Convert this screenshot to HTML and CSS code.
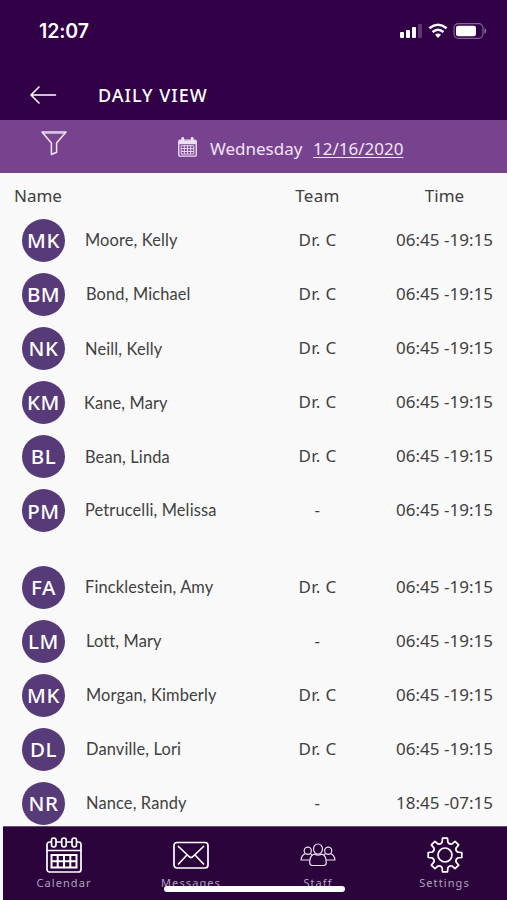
FILE: index.html
```html
<!DOCTYPE html>
<html lang="en">
<head>
<meta charset="utf-8">
<title>Daily View</title>
<link rel="stylesheet" href="styles.css">
</head>
<body>
<div class="app">
  <header class="header">
    <div class="status">
      <span class="clock">12:07</span>
      <svg class="status-icons" viewBox="0 0 88 18" fill="#fff">
        <rect x="1" y="11" width="4" height="6" rx="1"/><rect x="7" y="9" width="4" height="8" rx="1"/><rect x="13" y="6" width="4" height="11" rx="1"/><rect x="19" y="3" width="4" height="14" rx="1" opacity=".22"/>
        <g fill="none" stroke="#fff" stroke-width="2.5"><path d="M30.4 7.2Q39 .4 47.6 7.2"/><path d="M33.6 11Q39 6.4 44.4 11"/></g>
        <path d="M36 13.8Q39 11.4 42 13.8L39 17Z"/>
        <rect x="55" y="2.7" width="29" height="14.6" rx="4.5" fill="none" stroke="#fff" stroke-width="1.2" opacity=".4"/>
        <rect x="57" y="4.7" width="20" height="10.6" rx="2.2"/><path d="M85.5 7.3Q87.3 8 87.3 10T85.5 12.7Z" opacity=".45"/>
      </svg>
    </div>
    <div class="titlebar">
      <svg class="back" viewBox="0 0 28 20" fill="none" stroke="#fff" stroke-width="1.6" stroke-linecap="round" stroke-linejoin="round"><path d="M26.5 10H2M10 2L2 10L10 18"/></svg>
      <h1>DAILY VIEW</h1>
    </div>
  </header>
  <div class="datebar">
    <svg class="filter" viewBox="0 0 28 26" fill="none" stroke="#f5e6fb" stroke-width="1.5" stroke-linejoin="round"><path d="M2 2H26L16.6 13V22.2L11.4 24.5V13Z"/><path d="M3.5 3.4H24.5" stroke-width=".7"/></svg>
    <svg class="date-icon" viewBox="0 0 18 19" fill="none" stroke="#f1dff7"><rect x=".7" y="3" width="16.6" height="15.2" rx="1.2" stroke-width="1.3"/><path d="M1 4.5H17M1 6H17" stroke-width="1.8"/><path d="M4.5 1.5V5M13.5 1.5V5" stroke-width="2.8" stroke-linecap="round"/><path d="M3 8.3H15V16.2H3ZM6 8V16M9 8V16M12 8V16M3 11H15M3 13.7H15" stroke-width=".9"/></svg>
    <span class="weekday">Wednesday</span>
    <span class="date">12/16/2020</span>
  </div>
  <main class="list">
    <div class="row head"><span class="name-head">Name</span><span class="team">Team</span><span class="time">Time</span></div>
    <div class="row"><span class="avatar">MK</span><span class="name n1">Moore, Kelly</span><span class="team">Dr. C</span><span class="time">06:45 -19:15</span></div>
    <div class="row"><span class="avatar">BM</span><span class="name n2">Bond, Michael</span><span class="team">Dr. C</span><span class="time">06:45 -19:15</span></div>
    <div class="row"><span class="avatar">NK</span><span class="name n3">Neill, Kelly</span><span class="team">Dr. C</span><span class="time">06:45 -19:15</span></div>
    <div class="row"><span class="avatar">KM</span><span class="name n4">Kane, Mary</span><span class="team">Dr. C</span><span class="time">06:45 -19:15</span></div>
    <div class="row"><span class="avatar">BL</span><span class="name n5">Bean, Linda</span><span class="team">Dr. C</span><span class="time">06:45 -19:15</span></div>
    <div class="row"><span class="avatar">PM</span><span class="name n6">Petrucelli, Melissa</span><span class="team">-</span><span class="time">06:45 -19:15</span></div>
    <div class="row group"><span class="avatar">FA</span><span class="name n7">Fincklestein, Amy</span><span class="team">Dr. C</span><span class="time">06:45 -19:15</span></div>
    <div class="row"><span class="avatar">LM</span><span class="name n8">Lott, Mary</span><span class="team">-</span><span class="time">06:45 -19:15</span></div>
    <div class="row"><span class="avatar">MK</span><span class="name n9">Morgan, Kimberly</span><span class="team">Dr. C</span><span class="time">06:45 -19:15</span></div>
    <div class="row"><span class="avatar">DL</span><span class="name n10">Danville, Lori</span><span class="team">Dr. C</span><span class="time">06:45 -19:15</span></div>
    <div class="row"><span class="avatar">NR</span><span class="name n11">Nance, Randy</span><span class="team">-</span><span class="time">18:45 -07:15</span></div>
  </main>
  <nav class="tabs">
    <div class="tab">
      <svg viewBox="0 0 36 36" fill="none" stroke="#fff" stroke-width="1.7"><rect x="1" y="5" width="34" height="30" rx="2.5"/><path d="M1 13.5H35" /><g fill="#2a043b"><rect x="5.5" y="1" width="4.5" height="9" rx="2.2"/><rect x="15.7" y="1" width="4.5" height="9" rx="2.2"/><rect x="26" y="1" width="4.5" height="9" rx="2.2"/></g><path d="M5.5 18H30.5V30.5H5.5ZM11.7 18V30.5M18 18V30.5M24.3 18V30.5M5.5 24.2H30.5" stroke-width="2"/></svg>
      <span>Calendar</span>
    </div>
    <div class="tab">
      <svg viewBox="0 0 36 36" fill="none" stroke="#fff" stroke-width="1.7" stroke-linecap="round" stroke-linejoin="round"><rect x="1" y="5.5" width="34" height="25.5" rx="3"/><path d="M5.5 9.5L16 19.5Q18 21.5 20 19.5L30.5 9.5M5.5 27L14 18M30.5 27L22 18"/></svg>
      <span>Messages</span>
    </div>
    <div class="tab">
      <svg viewBox="0 0 36 36" fill="none" stroke="#eadfef" stroke-width="1.2" stroke-linejoin="round"><ellipse cx="18" cy="12" rx="4.5" ry="5"/><path d="M14.5 17.2C11 18 9.7 21 9.7 25.5Q9.7 28.5 12.5 28.5H23.5Q26.3 28.5 26.3 25.5C26.3 21 25 18 21.5 17.2Q18 19 14.5 17.2Z"/><circle cx="7.8" cy="13.7" r="3.6"/><circle cx="28.2" cy="13.7" r="3.6"/><path d="M5.5 16.5Q1.5 18 1 23H9.8M10.2 16.5L12.4 18M30.5 16.5Q34.5 18 35 23H26.2M25.8 16.5L23.6 18"/></svg>
      <span>Staff</span>
    </div>
    <div class="tab">
      <svg viewBox="0 0 36 36" fill="none" stroke="#fff" stroke-width="1.7" stroke-linejoin="round"><circle cx="18" cy="18" r="7"/><path d="M15.5 1.2H20.5L20.9 5.3Q22.3 7.6 24.9 7L28.1 4.35L31.65 7.9L29 11.1Q28.4 13.7 30.7 15.1L34.8 15.5V20.5L30.7 20.9Q28.4 22.3 29 24.9L31.65 28.1L28.1 31.65L24.9 29Q22.3 28.4 20.9 30.7L20.5 34.8H15.5L15.1 30.7Q13.7 28.4 11.1 29L7.9 31.65L4.35 28.1L7 24.9Q7.6 22.3 5.3 20.9L1.2 20.5V15.5L5.3 15.1Q7.6 13.7 7 11.1L4.35 7.9L7.9 4.35L11.1 7Q13.7 7.6 15.1 5.3Z"/></svg>
      <span>Settings</span>
    </div>
    <div class="home-indicator"></div>
  </nav>
</div>
</body>
</html>
```
FILE: styles.css
```css
* { box-sizing: border-box; }
body { margin: 0; background: #f9f9f9; color: #404040; font-family: "Noto Sans", sans-serif; }
.app { width: 507px; height: 900px; display: flex; flex-direction: column; overflow: hidden; }
.header { height: 120px; background: #310047; color: #fff; flex: none; }
.status { height: 62px; padding: 0 20px 0 39px; display: flex; align-items: center; justify-content: space-between; }
.clock { font: 600 19.5px/24px Inter, sans-serif; letter-spacing: -.1px; }
.status-icons { width: 88px; height: 18px; margin-top: -2px; }
.titlebar { height: 58px; padding: 8px 0 0 29px; display: flex; align-items: center; gap: 41px; }
.back { width: 28px; height: 20px; }
h1 { margin: 0; font-size: 18px; line-height: 24px; font-weight: 500; letter-spacing: 1px; }
.datebar { height: 53px; flex: none; background: #77438e; color: #f3e4f8; padding-left: 40px; display: flex; align-items: center; font-size: 17px; }
.filter { width: 28px; height: 26px; margin: -7px 110px 0 0; }
.date-icon { width: 19px; height: 20px; margin: 0 13px 0 0; }
.weekday { width: 103px; margin-top: 4px; }
.date { margin-top: 4px; text-decoration: underline; text-underline-offset: 2px; text-decoration-thickness: 1px; }
.list { height: 653px; flex: none; padding-left: 21.5px; }
.row { height: 54.1px; display: grid; grid-template-columns: 63.5px 163px 139px 115px; align-items: center; line-height: 22px; font-size: 17px; }
.head { height: 40px; padding-top: 6px; }
.name-head { grid-column: span 2; margin-left: -7.5px; }
.team, .time { text-align: center; margin-top: -1px; }
.head .team, .head .time { margin-top: 0; }
.team { letter-spacing: .3px; }
.time { white-space: nowrap; }
.group { margin-top: 22.5px; }
.avatar { width: 43px; height: 43px; border-radius: 50%; background: #573a78; color: #fff; display: flex; align-items: center; justify-content: center; font-size: 20.5px; font-weight: 500; letter-spacing: .5px; padding-left: 1px; }
.name { font-family: Lato, sans-serif; font-size: 16.4px; letter-spacing: .15px; white-space: nowrap; }
.n1 { margin-top: -1px; }
.n3 { padding-top: 2px; }
.n2, .n8, .n9, .n10, .n11 { padding-left: 1px; }
.n8, .n9, .n10, .n11 { margin-top: -1px; }
.n4 { margin-left: -1px; padding-top: 1px; }
.n5 { padding-top: 2px; }
.n6 { margin-top: -2px; }
.tabs { position: relative; height: 74px; margin-left: 3px; flex: none; background: #2a043b; border-top: 1px solid #6b5078; padding-top: 10px; display: grid; grid-template-columns: 122px 132px 122px 131px; color: #b4a2bd; }
.tab { display: flex; flex-direction: column; align-items: center; font-size: 11px; line-height: 16px; letter-spacing: 1.1px; gap: 2px; }
.tab svg { width: 36px; height: 36px; }
.home-indicator { position: absolute; left: 161px; top: 59px; width: 181px; height: 6px; border-radius: 3px; background: #fff; }
```
